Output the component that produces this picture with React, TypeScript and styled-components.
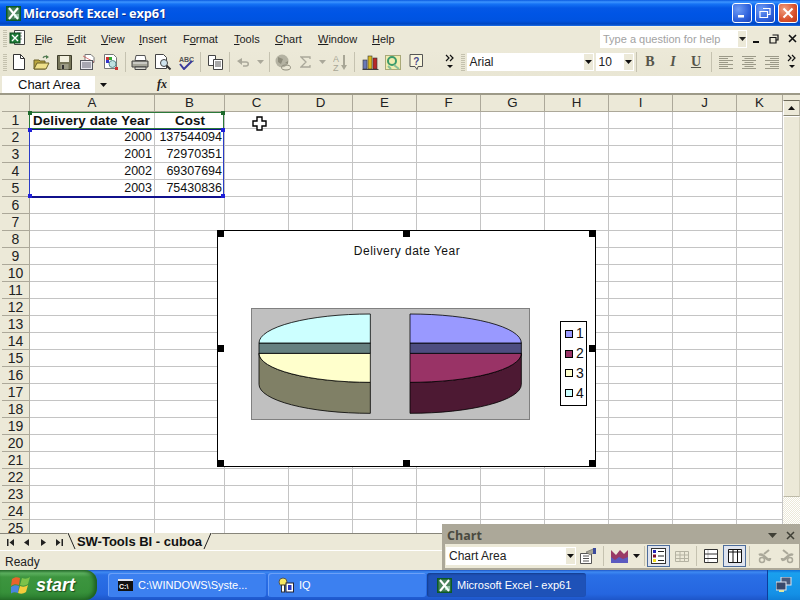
import React from "react";
import styled, { createGlobalStyle } from "styled-components";

const Global = createGlobalStyle`
  html, body { margin: 0; padding: 0; background: #ece9d8; }
  * { box-sizing: border-box; }
`;
const UI = `"Liberation Sans", Arial, sans-serif`;

const Desktop = styled.div`
  position: relative; width: 800px; height: 600px; overflow: hidden;
  display: flex; flex-direction: column; background: #ece9d8; font-family: ${UI}; color: #000;
`;
const TitleBar = styled.div`
  height: 26px; flex: none; display: flex; align-items: center; padding: 0 2px 0 6px;
  background: linear-gradient(180deg, #0a5ae0 0, #3d95ff 2px, #1673f5 4px, #0458e6 8px, #0055e5 14px, #0053e0 21px, #0046c0 24px, #1d6fe8 26px);
`;
const TitleText = styled.div`
  flex: 1; margin-left: 2px; color: #fff; font: bold 12.8px "Open Sans", sans-serif; letter-spacing: -.1px;
  text-shadow: 1px 1px 0 #0f2f8c;
`;
const WinBtn = styled.div<{ $red?: boolean }>`
  width: 20px; height: 20px; margin-left: 3px; border: 1px solid #fff; border-radius: 3px;
  display: flex; align-items: center; justify-content: center;
  background: ${p => p.$red
    ? "radial-gradient(circle at 30% 30%, #f0a080, #d9512c 60%, #b8371a)"
    : "radial-gradient(circle at 30% 30%, #6f9cf5, #2f62dc 60%, #1c44b8)"};
`;
const MenuBar = styled.div`
  height: 24px; flex: none; display: flex; align-items: center; padding-left: 3px; background: #ece9d8;
  border-top: 1px solid #f4f2e6;
`;
const Grip = styled.div`
  width: 4px; height: 17px; flex: none;
  background: repeating-linear-gradient(180deg, #c4c1ae 0 1px, transparent 1px 2px);
`;
const Spacer = styled.div<{ $w: number }>`
  width: ${p => p.$w}px; flex: none;
`;
const MenuItem = styled.div<{ $w: number }>`
  width: ${p => p.$w}px; flex: none; font-size: 11px; color: #1c1c1c; text-align: left;
  u { text-decoration: underline; }
`;
const HelpBox = styled.div`
  width: 147px; height: 18px; margin-left: 188px; flex: none; background: #fff; display: flex; align-items: center;
  justify-content: space-between; padding-left: 3px; font-size: 11px; color: #a2a2a2;
`;
const HelpArrow = styled.div`
  width: 10px; height: 100%; background: #ece9d8; display: flex; align-items: center; justify-content: center; border: 1px solid #fff;
`;
const DocCtl = styled.div`
  width: 18px; flex: none; display: flex; justify-content: center; align-items: center;
`;
const ToolBar = styled.div`
  height: 26px; flex: none; display: flex; align-items: center; padding: 0 0 2px 3px;
  background: linear-gradient(180deg, #ece9d8, #e9e6d4);
`;
const Tool = styled.div<{ $w?: number }>`
  width: ${p => p.$w ?? 23}px; height: 22px; flex: none; display: flex; align-items: center; justify-content: center;
`;
const Sep = styled.div<{ $w?: number }>`
  width: ${p => p.$w ?? 5}px; height: 20px; flex: none; position: relative;
  &::after { content: ""; display: block; width: 1px; height: 100%; margin: 0 auto; background: #c5c2b0; }
`;
const Combo = styled.div<{ $w: number; $ml?: number }>`
  width: ${p => p.$w}px; margin-left: ${p => p.$ml ?? 0}px; height: 18px; flex: none; background: #fff;
  display: flex; align-items: center; justify-content: space-between; padding-left: 3px; font-size: 12px; color: #222;
`;
const ComboDrop = styled.div`
  width: 11px; height: 100%; background: #ece9d8; border: 1px solid #fff; display: flex; align-items: center; justify-content: center;
`;
const FormatLetter = styled.div<{ $i?: boolean; $u?: boolean }>`
  width: 23px; flex: none; text-align: center; font: bold 14px "Liberation Serif", serif; color: #55554a;
  font-style: ${p => (p.$i ? "italic" : "normal")};
  text-decoration: ${p => (p.$u ? "underline" : "none")};
`;
const FormulaBar = styled.div`
  height: 17px; flex: none; display: flex; align-items: center; padding-left: 2px;
`;
const NameBox = styled.div`
  width: 93px; height: 100%; background: #fff; padding-left: 16px; font-size: 13px; line-height: 17px; color: #111;
`;
const NameRest = styled.div`
  width: 75px; height: 100%; display: flex; align-items: center; padding-left: 5px; justify-content: space-between;
`;
const Fx = styled.span`
  font: italic bold 12px "Liberation Serif", serif; margin-right: 3px; color: #222;
`;
const FormulaInput = styled.div`
  flex: 1; height: 100%; background: #fff;
`;
const SheetWrap = styled.div`
  height: 440px; flex: none; display: flex; padding-left: 2px; border-top: 2px solid #9d9a88;
  position: relative; overflow: hidden;
`;
const Grid = styled.div`
  width: 781px; display: grid; grid-template-columns: 28px 125px 70px repeat(8, 64px) 46px;
  grid-auto-rows: 17px; background: #fff; align-content: start;
  font-size: 12.5px;
`;
const Corner = styled.div`
  background: #ece9d8; border-right: 1px solid #aca899; border-bottom: 1px solid #aca899;
`;
const ColHead = styled.div`
  background: #ece9d8; border-right: 1px solid #aca899; border-bottom: 1px solid #aca899;
  text-align: center; line-height: 16px; font-size: 13.33px; color: #222;
`;
const RowHead = styled.div`
  background: #ece9d8; border-right: 1px solid #aca899; border-bottom: 1px solid #aca899;
  text-align: center; line-height: 17px; color: #222; font-size: 14px; overflow: hidden;
`;
const Cell = styled.div<{ $align?: string; $bold?: boolean }>`
  border-right: 1px solid #c4c4c4; border-bottom: 1px solid #c4c4c4; line-height: 17px; padding: 0 2px 0 3px; white-space: nowrap;
  overflow: hidden; text-align: ${p => p.$align ?? "left"}; font-weight: ${p => (p.$bold ? 700 : 400)};
  font-size: ${p => (p.$bold ? "13.33px" : "12.5px")};
  color: #111; letter-spacing: ${p => (p.$bold ? ".13px" : "0")};
`;
const Scroll = styled.div`
  width: 17px; flex: none; display: flex; flex-direction: column; background: #ece9d8; padding-top: 5px;
`;
const ScrollBtn = styled.div`
  height: 16px; flex: none; background: #ece9d8; border-top: 1px solid #6d6a5a; border-left: 1px solid #fff; border-right: 1px solid #aca899; border-bottom: 1px solid #888674;
  display: flex; align-items: center; justify-content: center;
`;
const Thumb = styled.div`
  height: 381px; flex: none; background: #ece9d8; border: 1px solid #fff; border-right-color: #d6d3c0; border-bottom-color: #bdbaa8;
`;
const Track = styled.div`
  flex: 1;
  background: repeating-conic-gradient(#ece9d8 0 25%, #fff 0 50%) 0 0 / 2px 2px;
`;
const TabRow = styled.div`
  height: 17px; flex: none; display: flex; align-items: stretch; padding-left: 2px; border-top: 1px solid #87857a; background: #ece9d8;
`;
const TabNav = styled.div`
  width: 16.5px; flex: none; display: flex; align-items: center; justify-content: center;
`;
const SheetTab = styled.div`
  width: 145px; margin: -1px 0 0 -1px; flex: none; display: flex; align-items: center; justify-content: center;
  position: relative; font-size: 13px; font-weight: 700; letter-spacing: 0; color: #111; background: #ece9d8;
`;
const TabSlant = styled.svg<{ $right?: boolean }>`
  position: absolute; top: 0; ${p => (p.$right ? "right: 0" : "left: 0")};
`;
const StatusBar = styled.div`
  height: 20px; flex: none; border-top: 1px solid #fff; padding-left: 5px; font-size: 12px; line-height: 22px; color: #222; background: #ece9d8;
`;
const Taskbar = styled.div`
  height: 30px; flex: none; display: flex; align-items: center;
  background: linear-gradient(180deg, #1f56c8 0, #3e8af2 2px, #2a6fe6 5px, #2566e0 24px, #1d55c8 30px);
`;
const StartBtn = styled.div`
  width: 97px; height: 30px; flex: none; display: flex; align-items: center; padding-left: 11px; gap: 5px;
  background: linear-gradient(180deg, #2f7a36 0, #5fb362 3px, #3d953f 7px, #37913a 22px, #2a7a2e 30px);
  border-radius: 0 12px 12px 0; box-shadow: inset -3px 0 4px #1c5c20;
  color: #fff; font: italic bold 18px "Liberation Sans", sans-serif; text-shadow: 1px 1px 1px #1a4a1a;
`;
const Task = styled.div<{ $w: number; $ml: number; $active?: boolean }>`
  width: ${p => p.$w}px; margin-left: ${p => p.$ml}px; height: 24px; flex: none; border-radius: 3px;
  display: flex; align-items: center; gap: 5px; padding-left: 10px; color: #fff; font-size: 11px; white-space: nowrap;
  background: ${p => (p.$active ? "#1e52b8" : "#3c80f0")};
  box-shadow: ${p => (p.$active ? "inset 1px 1px 2px #143c8c" : "inset 1px 1px 0 #6ba0f8")};
`;
const Tray = styled.div`
  width: 33px; height: 30px; margin-left: auto; flex: none; display: flex; align-items: center; justify-content: center;
  background: linear-gradient(180deg, #0f6fd8 0, #1aa0ee 3px, #1490e6 24px, #0f80d8 30px); border-left: 1px solid #0c3e9c;
`;
const Overlay = styled.div<{ $c: string; $dark?: string; $bw: number; $x: number; $y: number; $w: number; $h: number }>`
  position: absolute; left: ${p => p.$x}px; top: ${p => p.$y}px; width: ${p => p.$w}px; height: ${p => p.$h}px;
  border: 1px solid ${p => p.$c}; border-bottom-width: ${p => p.$bw}px; pointer-events: none;
  ${p => (p.$dark ? `border-top-color: ${p.$dark}; border-bottom-color: ${p.$dark};` : "")}
`;
const RangeHandle = styled.div<{ $c: string; $l?: boolean; $t?: boolean }>`
  position: absolute; width: 4px; height: 4px; background: ${p => p.$c};
  ${p => (p.$l ? "left: -2px" : "right: -2px")}; ${p => (p.$t ? "top: -2px" : "bottom: -2px")};
`;
const CrossCursor = styled.svg`
  position: absolute; left: 252px; top: 116px;
`;
const Chart = styled.div`
  position: absolute; left: 217px; top: 230px; width: 379px; height: 237px; background: #fff; border: 1px solid #000;
`;
const ChartTitle = styled.div`
  position: absolute; left: 0; right: 0; top: 13px; text-align: center; font-size: 12px; letter-spacing: .5px; color: #111; padding-left: 1px;
`;
const ChartHandle = styled.div<{ $x: string; $y: string }>`
  position: absolute; width: 7px; height: 7px; background: #000;
  ${p => p.$x}; ${p => p.$y};
`;
const Plot = styled.svg`
  position: absolute; left: 33px; top: 77px;
`;
const Legend = styled.div`
  position: absolute; left: 342px; top: 90px; width: 27px; height: 85px; border: 1px solid #000; background: #fff;
  display: flex; flex-direction: column; justify-content: space-around; padding: 2px 0 2px 4px;
`;
const LegendRow = styled.div`
  display: flex; align-items: center; gap: 3px; font-size: 14px; line-height: 15px; color: #111;
`;
const Swatch = styled.div<{ $c: string }>`
  width: 8px; height: 8px; border: 1px solid #000; background: ${p => p.$c};
`;
const FloatBar = styled.div`
  position: absolute; left: 442px; top: 524px; width: 358px; height: 46px; background: #ece9d8;
  border: 3px solid #aca899; border-bottom-width: 2px; border-right-width: 1px; display: flex; flex-direction: column;
`;
const FloatTitle = styled.div`
  height: 17px; flex: none; background: #aca899; display: flex; align-items: center; padding-left: 2px;
  font: bold 12.5px "Open Sans", sans-serif; color: #4a4a40; gap: 0;
`;
const FloatTitleText = styled.div`flex: 1;`;
const FloatBody = styled.div`
  flex: 1; display: flex; align-items: center; padding-left: 1px;
`;
const ActiveTool = styled.div`
  width: 23px; height: 22px; flex: none; display: flex; align-items: center; justify-content: center;
  background: #dfe4ee; border: 1px solid #4d6d9c;
`;
const FloatCtl = styled.div`
  width: 18px; flex: none; display: flex; justify-content: center; align-items: center;
`;

const Tri = ({ c = "#111", down = true }: { c?: string; down?: boolean }) => (
  <svg width="7" height="4" viewBox="0 0 7 4"><path d={down ? "M0 0h7L3.5 4z" : "M0 4h7L3.5 0z"} fill={c} /></svg>
);
const More = () => (
  <svg width="10" height="16" viewBox="0 0 10 16">
    <path d="M1 1l3 3-3 3M5 1l3 3-3 3" fill="none" stroke="#111" strokeWidth="1.2" />
    <path d="M2 11h6l-3 3z" fill="#111" />
  </svg>
);
const ExcelLogo = ({ s = 15 }: { s?: number }) => (
  <svg width={s} height={s} viewBox="0 0 15 15">
    <rect width="15" height="15" fill="#0c5a24" />
    <rect x="1.5" y="1.5" width="12" height="12" fill="#fff" opacity=".25" />
    <path d="M3 2l9 11M12 2L3 13" stroke="#fff" strokeWidth="2" />
    <path d="M8 11h5M8 9h5" stroke="#dfe" strokeWidth="1" />
  </svg>
);
const I = {
  New: () => <svg width="12" height="16" viewBox="0 0 12 16"><path d="M.5.5h7l4 4v11H.5z" fill="#fff" stroke="#333" /><path d="M7.5.5v4h4" fill="none" stroke="#333" /></svg>,
  Open: () => <svg width="17" height="15" viewBox="0 0 17 15"><path d="M10 3c1-2 3-2 4-1" fill="none" stroke="#5a7a5a" strokeWidth="1.2" /><path d="M13 0l3 2-3 2z" fill="#4a7a4a" /><path d="M1 5h5l1 1h5v8H1z" fill="#b9a53e" stroke="#6a6028" /><path d="M1 14l3-6h12l-3 6z" fill="#efe08a" stroke="#6a6028" /></svg>,
  Save: () => <svg width="15" height="15" viewBox="0 0 15 15"><path d="M.5.5h14v14H.5z" fill="#77765a" stroke="#3f3e2c" /><rect x="3" y="1" width="9" height="6" fill="#f2f0df" /><rect x="3.5" y="9" width="8" height="5.5" fill="#9c9b85" /><rect x="5" y="10" width="2" height="4" fill="#333" /></svg>,
  Mail: () => <svg width="16" height="16" viewBox="0 0 16 16"><path d="M5 .5h6l3 3v5H5z" fill="#fff" stroke="#777" /><path d="M3 2l11 6" stroke="#c44" strokeWidth=".7" /><rect x=".5" y="6.5" width="12" height="9" fill="#e8e8ee" stroke="#55585f" /><path d="M2 9h9M2 11h9M2 13h9" stroke="#667" /></svg>,
  Perm: () => <svg width="16" height="16" viewBox="0 0 16 16"><path d="M1.500.5h9l3 3v11h-12z" fill="#fff" stroke="#777" /><rect x="3" y="3" width="3" height="3" fill="#c33" /><rect x="6" y="3" width="3" height="3" fill="#3a3" /><rect x="3" y="6" width="3" height="3" fill="#33c" /><circle cx="9.500" cy="10" r="3.500" fill="#bfe0e0" stroke="#5a8a8a" /><rect x="12" y="13" width="3" height="3" fill="#c33" /></svg>,
  Print: () => <svg width="18" height="15" viewBox="0 0 18 15"><path d="M5 .5h9l1 5H4z" fill="#fff" stroke="#555" /><path d="M1 6h16v6H1z" fill="#a6a69a" stroke="#444" /><path d="M2 8h14" stroke="#eee" /><path d="M4 12h11v2.500H4z" fill="#d8d8d0" stroke="#444" /></svg>,
  Preview: () => <svg width="17" height="17" viewBox="0 0 17 17"><path d="M.5.5h8l3 3v11H.500z" fill="#fff" stroke="#444" /><circle cx="9" cy="9" r="3.500" fill="#cfe4ee" stroke="#444" /><path d="M11.500 11.500l4 4" stroke="#333" strokeWidth="2" /></svg>,
  Spell: () => <svg width="16" height="15" viewBox="0 0 16 15"><text x="1" y="6.500" fontSize="7" fontFamily="Liberation Sans" fontWeight="700" fill="#555">ABC</text><path d="M2 9l4 5 8-8" fill="none" stroke="#3a3a9c" strokeWidth="2" /></svg>,
  Copy: () => <svg width="15" height="15" viewBox="0 0 15 15"><path d="M.5.5h7v10h-7z" fill="#fff" stroke="#444" /><path d="M5.500 4.500h9v10h-9z" fill="#fff" stroke="#444" /><path d="M7 7h6M7 9h6M7 11h6" stroke="#555" /></svg>,
  Undo: () => <svg width="13" height="10" viewBox="0 0 13 10"><path d="M3 5h6c3 0 3 4 0 4H6" fill="none" stroke="#aaa89a" strokeWidth="1.500" /><path d="M0 4l5-3v7z" fill="#aaa89a" /></svg>,
  Globe: () => <svg width="16" height="17" viewBox="0 0 16 17"><circle cx="7" cy="7" r="6.500" fill="#b4b2a2" /><path d="M3 3l5 2-2 5-3-2zM10 9l3-2v3z" fill="#8e8c7c" /><ellipse cx="11" cy="13.500" rx="4.500" ry="2.500" fill="none" stroke="#8e8c7c" /></svg>,
  Sigma: () => <svg width="11" height="12" viewBox="0 0 11 12"><path d="M10 3V1H1l5 5-5 5h9V9" fill="none" stroke="#aaa89a" strokeWidth="1.300" /></svg>,
  Sort: () => <svg width="15" height="17" viewBox="0 0 15 17"><text x="0" y="8" fontSize="9" fontFamily="Liberation Sans" fill="#a8a696">A</text><text x="0" y="16.500" fontSize="9" fontFamily="Liberation Sans" fill="#a8a696">Z</text><path d="M11 1v11" stroke="#a8a696" strokeWidth="2" /><path d="M8 11h6l-3 5z" fill="#a8a696" /></svg>,
  ChartBars: () => <svg width="17" height="15" viewBox="0 0 17 15"><path d="M.5 14.500h16" stroke="#444" /><rect x="1" y="5" width="4" height="9" fill="#6a7ab8" stroke="#333" strokeWidth=".6" /><rect x="6" y="1" width="4" height="13" fill="#d8b820" stroke="#333" strokeWidth=".6" /><rect x="11" y="3" width="4" height="11" fill="#b82828" stroke="#333" strokeWidth=".6" /></svg>,
  Map: () => <svg width="16" height="15" viewBox="0 0 16 15"><rect x=".5" y=".5" width="15" height="14" fill="#f0ecb0" stroke="#a8a878" /><circle cx="7" cy="6" r="4" fill="none" stroke="#3a9a6a" strokeWidth="2" /><path d="M9 10l5 4M3 11l3 3" stroke="#8ac098" strokeWidth="2" /></svg>,
  Help: () => <svg width="15" height="17" viewBox="0 0 15 17"><path d="M1 .5h12.500v12H9l-1 3-2-3H1z" fill="#f8f5dc" stroke="#555" /><text x="4.200" y="10.500" fontSize="10" fontWeight="700" fontFamily="Liberation Sans" fill="#4a4a8c">?</text></svg>,
  Align: ({ n }: { n: number }) => (
    <svg width="14" height="13" viewBox="0 0 14 13">
      {[0, 2, 4, 6, 8, 10, 12].map((y, k) => {
        const w = k % 2 ? 9 : 14;
        const x = n === 0 ? 0 : n === 1 ? (14 - w) / 2 : 14 - w;
        return <rect key={y} x={x} y={y} width={w} height="1" fill="#9b9988" />;
      })}
    </svg>
  ),
  Fmt: () => <svg width="17" height="16" viewBox="0 0 17 16"><path d="M.5 5.500h11v10H.5z" fill="#fff" stroke="#555" /><path d="M3 8h6M3 10.500h6M3 13h6" stroke="#555" /><path d="M6 4l7-3 2 3-5 3z" fill="#a8a696" stroke="#666" strokeWidth=".6" /><rect x="13" y="0" width="3" height="6" fill="#3a4a9c" /></svg>,
  Area: () => <svg width="17" height="14" viewBox="0 0 17 14"><path d="M0 1l5 5 4-5 4 4 4-4v13H0z" fill="#993a66" /><path d="M0 8l4 3 4-3 4 2 5-2v6H0z" fill="#5a5ac0" /></svg>,
  LegendT: () => <svg width="15" height="16" viewBox="0 0 15 16"><rect x=".5" y=".5" width="14" height="15" fill="#fff" stroke="#333" /><rect x="2" y="2" width="3" height="3" fill="#2222b8" /><rect x="2" y="6.500" width="3" height="3" fill="#801030" /><rect x="2" y="11" width="3" height="3" fill="#f2e020" /><path d="M7 3.500h6M7 8h6M7 12.500h6" stroke="#222" /></svg>,
  TableDis: () => <svg width="14" height="11" viewBox="0 0 14 11"><path d="M.5.5h13v10H.5zM.5 4h13M.5 7.500h13M5 .5v10M9.500.5v10" fill="none" stroke="#b4b2a2" /></svg>,
  ByRow: () => <svg width="14" height="14" viewBox="0 0 14 14"><path d="M.5.500h13v13H.500z" fill="#fff" stroke="#333" /><path d="M.5 5h13M.5 9.500h13" stroke="#333" /><path d="M4 .5v13" stroke="#333" opacity=".3" /></svg>,
  ByCol: () => <svg width="14" height="14" viewBox="0 0 14 14"><path d="M.5.500h13v13H.500z" fill="#fff" stroke="#111" /><path d="M5 .5v13M9.500.5v13M.5 3h13" stroke="#111" /></svg>,
  Angle: ({ flip }: { flip?: boolean }) => (
    <svg width="15" height="15" viewBox="0 0 15 15" style={flip ? { transform: "scaleX(-1)" } : undefined}>
      <path d="M2 6c3-2 5 1 7 3s4 3 4 0" fill="none" stroke="#aaa89a" strokeWidth="2.500" />
      <circle cx="5" cy="11" r="2.500" fill="none" stroke="#aaa89a" strokeWidth="1.500" />
      <path d="M12 1l-5 4" stroke="#aaa89a" strokeWidth="2" />
    </svg>
  ),
};

const Pie = ({ a, b, c, d, mirror }: { a: string; b: string; c: string; d: string; mirror?: boolean }) => (
  <g transform={mirror ? "translate(358,18) scale(-1,1)" : "translate(477,18)"} stroke="#000" strokeWidth="2.400" strokeLinejoin="round">
    <path d="M0,205 A334,87 0 0 0 334,118 V211 A334,87 0 0 1 0,298 Z" fill={d} />
    <path d="M0,118 H334 A334,87 0 0 1 0,205 Z" fill={c} />
    <rect x="0" y="87" width="334" height="31" fill={b} />
    <path d="M0,0 A334,87 0 0 1 334,87 H0 Z" fill={a} />
  </g>
);

const cols = ["A", "B", "C", "D", "E", "F", "G", "H", "I", "J", "K"];
const data: Record<number, [string, string]> = {
  2: ["2000", "137544094"],
  3: ["2001", "72970351"],
  4: ["2002", "69307694"],
  5: ["2003", "75430836"],
};
const rows = Array.from({ length: 25 }, (_, i) => i + 1);
const menus: [string, string, number][] = [
  ["F", "ile", 32], ["E", "dit", 34], ["V", "iew", 38], ["I", "nsert", 44],
  ["", "Format", 51], ["T", "ools", 41], ["C", "hart", 43], ["W", "indow", 54], ["H", "elp", 40],
];

export default function App() {
  return (
    <Desktop>
      <Global />
      <TitleBar>
        <ExcelLogo />
        <TitleText>Microsoft Excel - exp61</TitleText>
        <WinBtn><svg width="10" height="10" viewBox="0 0 10 10"><rect x="1" y="7" width="6" height="2.500" fill="#fff" /></svg></WinBtn>
        <WinBtn><svg width="12" height="12" viewBox="0 0 12 12"><path d="M4 1.500h7v6H9M1 4.500h7.500v6H1z" fill="none" stroke="#fff" strokeWidth="1.200" /></svg></WinBtn>
        <WinBtn $red><svg width="12" height="12" viewBox="0 0 12 12"><path d="M1.500 1.500l9 9M10.500 1.500l-9 9" stroke="#fff" strokeWidth="2" /></svg></WinBtn>
      </TitleBar>

      <MenuBar>
        <Grip />
        <Tool $w={21}>
          <svg width="17" height="17" viewBox="0 0 17 17"><path d="M5.500.5h10v14h-10z" fill="#fff" stroke="#444" /><path d="M8 3h5M8 6h5M8 9h5" stroke="#888" /><rect x="1" y="3" width="10" height="10" fill="#1e7a38" stroke="#0c4a1c" /><path d="M3 5l6 6M9 5l-6 6" stroke="#fff" strokeWidth="1.400" /></svg>
        </Tool>
        <Spacer $w={7} />
        {menus.map(([u, rest, w]) => (
          <MenuItem key={u + rest} $w={w}>
            {rest === "Format" ? <>F<u>o</u>rmat</> : <><u>{u}</u>{rest}</>}
          </MenuItem>
        ))}
        <HelpBox>
          Type a question for help
          <HelpArrow><Tri c="#222" /></HelpArrow>
        </HelpBox>
        <DocCtl><svg width="10" height="10" viewBox="0 0 10 10"><rect x="2" y="7" width="6" height="2" fill="#111" /></svg></DocCtl>
        <DocCtl><svg width="10" height="10" viewBox="0 0 10 10"><path d="M3.500 1h5.500v5H7.500M1 3.500h6v5.500H1z" fill="none" stroke="#111" strokeWidth="1.200" /></svg></DocCtl>
        <DocCtl><svg width="9" height="9" viewBox="0 0 9 9"><path d="M1 1l7 7M8 1l-7 7" stroke="#111" strokeWidth="1.600" /></svg></DocCtl>
      </MenuBar>

      <ToolBar>
        <Grip />
        <Tool><I.New /></Tool>
        <Tool><I.Open /></Tool>
        <Tool><I.Save /></Tool>
        <Tool><I.Mail /></Tool>
        <Tool><I.Perm /></Tool>
        <Sep $w={6.5} />
        <Tool><I.Print /></Tool>
        <Tool><I.Preview /></Tool>
        <Tool><I.Spell /></Tool>
        <Sep $w={6} />
        <Tool><I.Copy /></Tool>
        <Sep />
        <Tool><I.Undo /></Tool>
        <Tool $w={12}><Tri c="#aaa89a" /></Tool>
        <Sep $w={5} />
        <Tool><I.Globe /></Tool>
        <Tool $w={22}><I.Sigma /></Tool>
        <Tool $w={12}><Tri c="#aaa89a" /></Tool>
        <Tool><I.Sort /></Tool>
        <Sep $w={6} />
        <Tool $w={26}><I.ChartBars /></Tool>
        <Tool $w={18}><I.Map /></Tool>
        <Tool $w={30}><I.Help /></Tool>
        <Spacer $w={7} />
        <Tool $w={22}><More /></Tool>
        <Grip />
        <Combo $w={127} $ml={2}>Arial<ComboDrop><Tri /></ComboDrop></Combo>
        <Combo $w={38} $ml={2}>10<ComboDrop><Tri /></ComboDrop></Combo>
        <Sep $w={5} />
        <FormatLetter>B</FormatLetter>
        <FormatLetter $i>I</FormatLetter>
        <FormatLetter $u>U</FormatLetter>
        <Sep $w={7} />
        <Tool><I.Align n={0} /></Tool>
        <Tool><I.Align n={1} /></Tool>
        <Tool><I.Align n={2} /></Tool>
        <Tool $w={16}><More /></Tool>
      </ToolBar>

      <FormulaBar>
        <NameBox>Chart Area</NameBox>
        <NameRest><Tri /><Fx>fx</Fx></NameRest>
        <FormulaInput />
      </FormulaBar>

      <SheetWrap>
        <Grid>
          <Corner />
          {cols.map(c => <ColHead key={c}>{c}</ColHead>)}
          {rows.map(r => (
            <React.Fragment key={r}>
              <RowHead>{r}</RowHead>
              {cols.map((c, i) => {
                if (r === 1 && i === 0) return <Cell key={c} $bold>Delivery date Year</Cell>;
                if (r === 1 && i === 1) return <Cell key={c} $bold $align="center">Cost</Cell>;
                if (data[r] && i < 2) return <Cell key={c} $align="right">{data[r][i]}</Cell>;
                return <Cell key={c} />;
              })}
            </React.Fragment>
          ))}
        </Grid>
        <Scroll>
          <ScrollBtn><Tri down={false} /></ScrollBtn>
          <Thumb />
          <Track />
        </Scroll>
      </SheetWrap>

      <TabRow>
        <TabNav><svg width="7" height="7" viewBox="0 0 7 7"><path d="M0 0h1.500v7H0zM7 0v7L2.500 3.500z" fill="#222" /></svg></TabNav>
        <TabNav><svg width="5" height="7" viewBox="0 0 5 7"><path d="M5 0v7L0 3.500z" fill="#222" /></svg></TabNav>
        <TabNav><svg width="5" height="7" viewBox="0 0 5 7"><path d="M0 0v7l5-3.500z" fill="#222" /></svg></TabNav>
        <TabNav><svg width="7" height="7" viewBox="0 0 7 7"><path d="M7 0H5.500v7H7zM0 0v7l4.500-3.500z" fill="#222" /></svg></TabNav>
        <SheetTab>
          <TabSlant width="9" height="17" viewBox="0 0 9 17"><path d="M1 0l7 16" stroke="#222" fill="none" /></TabSlant>
          SW-Tools BI - cuboa
          <TabSlant $right width="9" height="17" viewBox="0 0 9 17"><path d="M8 0L1 16" stroke="#222" fill="none" /></TabSlant>
        </SheetTab>
      </TabRow>

      <StatusBar>Ready</StatusBar>

      <Taskbar>
        <StartBtn>
          <svg width="20" height="19" viewBox="0 0 20 19">
            <path d="M1 3c3-2 5-2 8-1l-1 7c-3-1-5-1-8 1z" fill="#e8632c" />
            <path d="M11 2c3 1 5 1 8-1l-2 7c-3 2-5 2-8 1z" fill="#7cc24a" />
            <path d="M0 11c3-2 5-2 8-1l-1 7c-3-1-5-1-8 1z" fill="#4a86e0" />
            <path d="M9 10c3 1 5 1 8-1l-2 7c-3 2-5 2-8 1z" fill="#f4cc3c" />
          </svg>
          start
        </StartBtn>
        <Task $w={158} $ml={11}>
          <svg width="15" height="12" viewBox="0 0 15 12"><rect width="15" height="12" fill="#111" /><rect width="15" height="2" fill="#dfe4f0" /><text x="1" y="9.500" fontSize="7" fontFamily="Liberation Sans" fontWeight="700" fill="#fff">C:\</text></svg>
          C:\WINDOWS\Syste...
        </Task>
        <Task $w={158} $ml={2}>
          <svg width="16" height="16" viewBox="0 0 16 16"><circle cx="5" cy="5" r="4" fill="#f8e860" stroke="#555" /><rect x="3.500" y="8" width="3" height="7" fill="#fff" stroke="#333" /><rect x="8" y="6" width="7.500" height="9" fill="#fff" stroke="#223" /><rect x="10" y="8" width="3.500" height="5" fill="#2a3ac0" /></svg>
          IQ
        </Task>
        <Task $w={159} $ml={1} $active>
          <ExcelLogo />
          Microsoft Excel - exp61
        </Task>
        <Tray>
          <svg width="16" height="16" viewBox="0 0 16 16"><rect x="5" y="0" width="10" height="8" fill="#4a5a7a" stroke="#dfe6f0" /><rect x="0" y="5" width="10" height="8" fill="#39486a" stroke="#dfe6f0" /><rect x="3" y="13" width="5" height="2" fill="#dfe6a0" /></svg>
        </Tray>
      </Taskbar>

      <Overlay $c="#2b7a3a" $bw={1} $x={29} $y={112} $w={195} $h={17}>
        <RangeHandle $c="#1e6a2c" $l $t />
        <RangeHandle $c="#1e6a2c" $t />
      </Overlay>
      <Overlay $c="#2a3cc8" $dark="#10108c" $bw={2} $x={29} $y={129} $w={195} $h={69}>
        <RangeHandle $c="#1e1ed8" $l $t />
        <RangeHandle $c="#1e1ed8" $t />
        <RangeHandle $c="#1e1ed8" $l />
        <RangeHandle $c="#1e1ed8" />
      </Overlay>
      <CrossCursor width="15" height="15" viewBox="0 0 15 15">
        <path d="M5 1h5v4h4v5h-4v4H5v-4H1V5h4z" fill="#fff" stroke="#000" strokeWidth="1.400" />
      </CrossCursor>

      <Chart>
        <ChartTitle>Delivery date Year</ChartTitle>
        <Plot width="279" height="112" viewBox="0 0 837 336">
          <rect x="1.500" y="1.500" width="834" height="333" fill="#c0c0c0" stroke="#808080" strokeWidth="3" />
          <Pie a="#ccffff" b="#668080" c="#ffffcc" d="#808066" mirror />
          <Pie a="#9999ff" b="#4d4d80" c="#993366" d="#4d1933" />
        </Plot>
        <Legend>
          <LegendRow><Swatch $c="#9999ff" />1</LegendRow>
          <LegendRow><Swatch $c="#993366" />2</LegendRow>
          <LegendRow><Swatch $c="#ffffcc" />3</LegendRow>
          <LegendRow><Swatch $c="#ccffff" />4</LegendRow>
        </Legend>
        <ChartHandle $x="left: -1px" $y="top: -1px" />
        <ChartHandle $x="left: 185px" $y="top: -1px" />
        <ChartHandle $x="right: -1px" $y="top: -1px" />
        <ChartHandle $x="left: -1px" $y="top: 114px" />
        <ChartHandle $x="right: -1px" $y="top: 114px" />
        <ChartHandle $x="left: -1px" $y="bottom: -1px" />
        <ChartHandle $x="left: 185px" $y="bottom: -1px" />
        <ChartHandle $x="right: -1px" $y="bottom: -1px" />
      </Chart>

      <FloatBar>
        <FloatTitle>
          <FloatTitleText>Chart</FloatTitleText>
          <FloatCtl><svg width="9" height="5" viewBox="0 0 9 5"><path d="M0 0h9L4.500 5z" fill="#3f3f36" /></svg></FloatCtl>
          <FloatCtl><svg width="9" height="9" viewBox="0 0 9 9"><path d="M1 1l7 7M8 1l-7 7" stroke="#3f3f36" strokeWidth="1.500" /></svg></FloatCtl>
        </FloatTitle>
        <FloatBody>
          <Combo $w={130}>Chart Area<ComboDrop><Tri /></ComboDrop></Combo>
          <Tool $w={25}><I.Fmt /></Tool>
          <Sep $w={5} />
          <Tool $w={26}><I.Area /></Tool>
          <Tool $w={9}><Tri /></Tool>
          <Sep $w={6} />
          <ActiveTool><I.LegendT /></ActiveTool>
          <Tool $w={24}><I.TableDis /></Tool>
          <Sep $w={4} />
          <Tool $w={25}><I.ByRow /></Tool>
          <ActiveTool><I.ByCol /></ActiveTool>
          <Sep $w={7} />
          <Tool $w={23}><I.Angle /></Tool>
          <Tool $w={23}><I.Angle flip /></Tool>
        </FloatBody>
      </FloatBar>
    </Desktop>
  );
}
